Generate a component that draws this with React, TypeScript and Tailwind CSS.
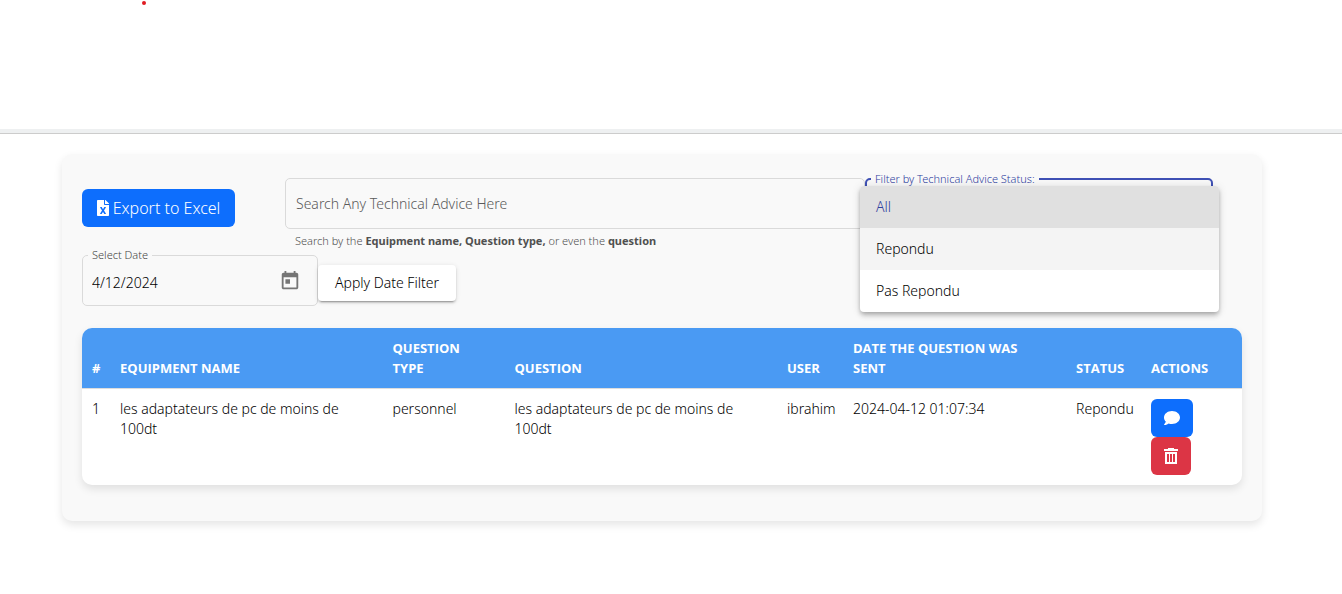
import { useState } from "react";
import { FaFileExcel, FaComment } from "react-icons/fa";

const statuses = ["All", "Repondu", "Pas Repondu"];

const rows = [
  {
    id: 1,
    equipment: "les adaptateurs de pc de moins de 100dt",
    type: "personnel",
    question: "les adaptateurs de pc de moins de 100dt",
    user: "ibrahim",
    date: "2024-04-12 01:07:34",
    status: "Repondu",
  },
];

function CalendarIcon() {
  return (
    <svg viewBox="0 0 24 24" className="size-[22px]" fill="currentColor" aria-hidden="true">
      <path d="M19 3h-1V1h-2v2H8V1H6v2H5c-1.11 0-1.99.9-1.99 2L3 19c0 1.1.89 2 2 2h14c1.1 0 2-.9 2-2V5c0-1.1-.9-2-2-2zm0 16H5V8h14v11zM7 10h5v5H7z" />
    </svg>
  );
}

function TrashIcon() {
  return (
    <svg viewBox="0 0 14 16" className="h-4 w-3.5" fill="currentColor" aria-hidden="true">
      <path
        fillRule="evenodd"
        d="M4 0h6v1h4v2H0V1h4zM1 4h12v12H1zM3 6v8h2V6zm3 0v8h2V6zm3 0v8h2V6z"
      />
    </svg>
  );
}

function StatusFilter() {
  const [status, setStatus] = useState("All");
  return (
    <div className="relative mr-[29px] w-[348px]">
      <fieldset className="rounded-[5px] border-2 border-[#3f51b5] px-1">
        <legend className="px-1 text-[11px] leading-[14px] text-[#303f9f]">
          <label htmlFor="status">Filter by Technical Advice Status:</label>
        </legend>
        <select
          id="status"
          value={status}
          onChange={(e) => setStatus(e.target.value)}
          className="block h-[41px] w-full appearance-none bg-transparent px-1 text-sm outline-none"
        >
          {statuses.map((s) => (
            <option key={s}>{s}</option>
          ))}
        </select>
      </fieldset>
      <div
        role="listbox"
        aria-label="Technical advice status"
        className="absolute top-3.5 -right-1.5 -left-[5px] z-10 overflow-hidden rounded bg-white shadow-[0_2px_4px_-1px_rgba(0,0,0,0.2),0_4px_5px_0_rgba(0,0,0,0.14),0_1px_10px_0_rgba(0,0,0,0.12)]"
      >
        {statuses.map((s) => (
          <button
            key={s}
            type="button"
            role="option"
            aria-selected={s === status}
            onClick={() => setStatus(s)}
            className="block h-[42px] w-full px-4 text-left text-sm text-black hover:bg-[#f4f4f4] aria-selected:bg-[#e0e0e0] aria-selected:text-[#303f9f] [&:nth-child(2)]:bg-[#f4f4f4]"
          >
            {s}
          </button>
        ))}
      </div>
    </div>
  );
}

const th = "py-2.5 pr-6 pl-2.5 align-bottom font-bold";
const thNarrow = "px-2.5 py-2.5 align-bottom font-bold";
const td = "px-2.5 py-2.5 align-top";

export default function App() {
  return (
    <div className="bg-white font-['Noto_Sans',sans-serif] font-light text-black">
      <header className="h-[134px] border-b border-[#cccccc] bg-[#eef0f1] pb-1">
        <div className="h-full bg-white pt-px pl-[142px]">
          <span className="block size-1 rounded-full bg-[#e01b22]" />
        </div>
      </header>

      <main className="py-5 pr-[18px]">
        <div className="mx-auto max-w-[1200px] rounded-[10px] bg-[#f9f9f9] px-5 pt-[18px] pb-9 shadow-[0_4px_8px_rgba(0,0,0,0.1)]">
          <div className="flex items-start">
            <div className="w-[203px] pt-[17px]">
              <button
                type="button"
                className="flex h-[38px] w-[153px] items-center justify-center gap-1 rounded-md bg-[#0d6efd] text-base whitespace-nowrap text-white"
              >
                <FaFileExcel className="h-4 w-3" />
                Export to Excel
              </button>
            </div>
            <div className="flex-1 pt-1.5">
              <input
                aria-label="Search Any Technical Advice Here"
                placeholder="Search Any Technical Advice Here"
                className="block h-[51px] w-full rounded-[5px] border border-[#dadada] bg-transparent px-2.5 text-sm outline-none placeholder:text-[#5a5a5a]"
              />
              <p className="px-2.5 pt-1 text-[11px] leading-[15px] text-[#505050]">
                Search by the{" "}
                <b className="font-bold">Equipment name, Question type,</b> or even the{" "}
                <b className="font-bold">question</b>
              </p>
            </div>
            <StatusFilter />
          </div>

          <div className="flex items-end">
            <fieldset className="w-[236px] min-w-0 rounded-[5px] border border-[#dadada] px-[5px]">
              <legend className="px-1 text-[11px] leading-[14px] text-[#444444]">
                <label htmlFor="date">Select Date</label>
              </legend>
              <div className="flex h-[43px] items-start pr-[11px]">
                <input
                  id="date"
                  defaultValue="4/12/2024"
                  className="h-10 min-w-0 flex-1 bg-transparent px-1 text-sm text-black outline-none"
                />
                <button type="button" aria-label="Open calendar" className="pt-2 text-[#757575]">
                  <CalendarIcon />
                </button>
              </div>
            </fieldset>
            <button
              type="button"
              className="mb-[5px] h-9 w-[138px] rounded bg-white text-sm whitespace-nowrap text-black shadow-[0_3px_1px_-2px_rgba(0,0,0,0.2),0_2px_2px_0_rgba(0,0,0,0.14),0_1px_5px_0_rgba(0,0,0,0.12)]"
            >
              Apply Date Filter
            </button>
          </div>

          <div className="mt-[22px] overflow-hidden rounded-[10px] bg-white shadow-[0_4px_8px_rgba(0,0,0,0.1)]">
            <table className="w-full table-fixed border-collapse text-left text-sm leading-5">
              <colgroup>
                <col className="w-7" />
                <col />
                <col className="w-[122px]" />
                <col />
                <col className="w-[66px]" />
                <col className="w-[223px]" />
                <col className="w-[75px]" />
                <col className="w-[101px]" />
              </colgroup>
              <thead className="border-b border-[#dddddd] bg-[#4a9af3] font-['Open_Sans',sans-serif] text-[13px] text-white uppercase">
                <tr>
                  <th className={thNarrow}>#</th>
                  <th className={th}>Equipment Name</th>
                  <th className={th}>Question Type</th>
                  <th className={th}>Question</th>
                  <th className={thNarrow}>User</th>
                  <th className={th}>Date the question was sent</th>
                  <th className={thNarrow}>Status</th>
                  <th className={th}>Actions</th>
                </tr>
              </thead>
              <tbody>
                {rows.map((r) => (
                  <tr key={r.id}>
                    <td className={td}>{r.id}</td>
                    <td className={td}>{r.equipment}</td>
                    <td className={td}>{r.type}</td>
                    <td className={td}>{r.question}</td>
                    <td className={td}>{r.user}</td>
                    <td className={td}>{r.date}</td>
                    <td className={td}>{r.status}</td>
                    <td className={td}>
                      <button
                        type="button"
                        aria-label="Reply"
                        className="flex h-[38px] w-[42px] items-center justify-center rounded-md bg-[#0d6efd] text-base text-white"
                      >
                        <FaComment />
                      </button>
                      <button
                        type="button"
                        aria-label="Delete"
                        className="flex h-[38px] w-10 items-center justify-center rounded-md bg-[#dc3545] text-white"
                      >
                        <TrashIcon />
                      </button>
                    </td>
                  </tr>
                ))}
              </tbody>
            </table>
          </div>
        </div>
      </main>
    </div>
  );
}
